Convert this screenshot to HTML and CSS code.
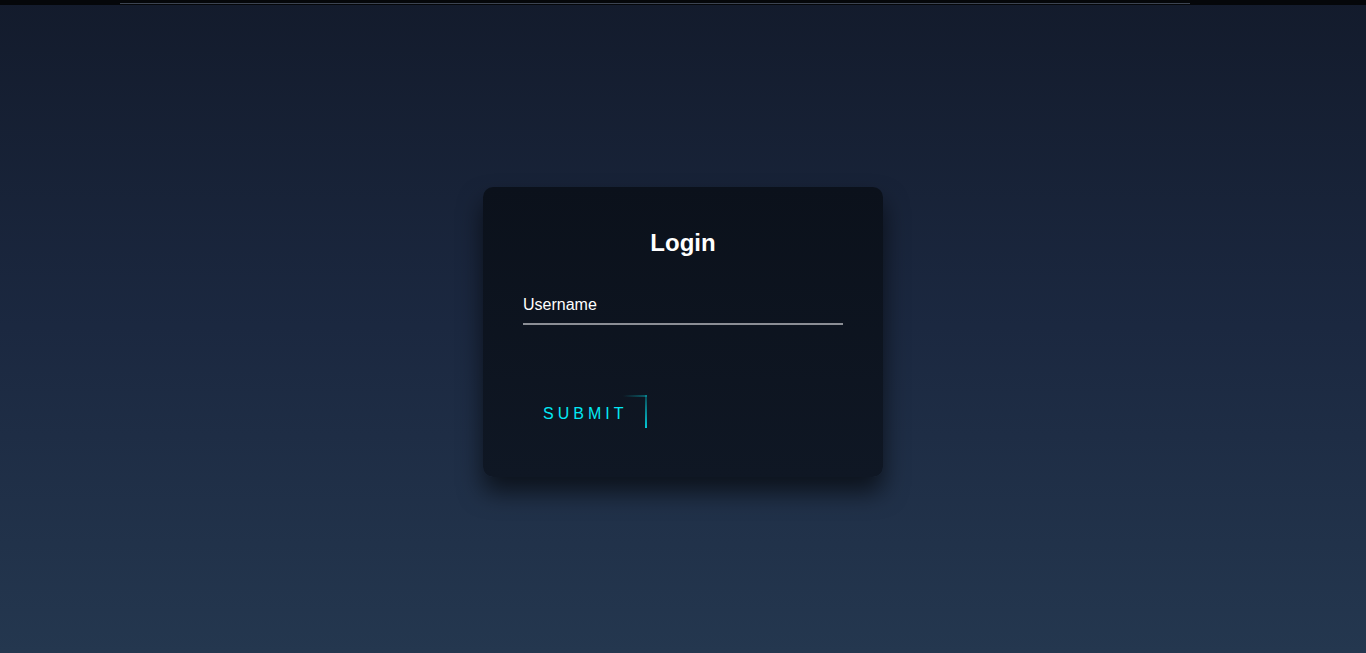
FILE: index.html
```html
<!DOCTYPE html>
<html lang="en">
<head>
<meta charset="utf-8">
<title>Login</title>
<link rel="stylesheet" href="styles.css">
</head>
<body>
<div class="topbar"><div class="topline"></div></div>
<main class="stage">
  <form class="login-box">
    <h2 class="title">Login</h2>
    <div class="user-box">
      <input class="field" type="text" required>
      <label class="label">Username</label>
    </div>
    <a class="submit" href="#">
      <span class="edge edge-top"></span>
      <span class="edge edge-right"></span>
      SUBMIT
    </a>
  </form>
</main>
</body>
</html>
```
FILE: styles.css
```css
html, body {
  margin: 0;
  padding: 0;
  height: 100%;
}
body {
  font-family: "Liberation Sans", Arial, sans-serif;
  background: linear-gradient(180deg, #131b2c 0%, #1b2840 50%, #24374f 100%);
  overflow: hidden;
}
.topbar {
  height: 5px;
  background: #05070a;
  position: relative;
}
.topline {
  position: absolute;
  left: 120px;
  width: 1070px;
  bottom: 1px;
  height: 1px;
  background: #3c4452;
}
.stage {
  height: 648px;
  display: flex;
  justify-content: center;
  align-items: flex-start;
  padding-top: 182px;
  box-sizing: border-box;
}
.login-box {
  width: 400px;
  box-sizing: border-box;
  padding: 42px 40px 40px;
  border-radius: 10px;
  background: linear-gradient(180deg, #0b111b 0%, #0f1724 100%);
  box-shadow: 0 15px 25px rgba(0, 0, 0, 0.6);
}
.title {
  margin: 0 0 28px;
  font-size: 24px;
  font-weight: bold;
  color: #fff;
  text-align: center;
  line-height: 28px;
}
.user-box {
  position: relative;
}
.field {
  display: block;
  width: 100%;
  box-sizing: border-box;
  padding: 10px 0;
  font-size: 16px;
  line-height: 18px;
  height: 40px;
  color: #fff;
  margin-bottom: 30px;
  border: none;
  border-bottom: 2px solid #8b8e95;
  outline: none;
  background: transparent;
  font-family: inherit;
}
.label {
  position: absolute;
  top: 0;
  left: 0;
  padding: 11px 0 9px;
  font-size: 16px;
  line-height: 18px;
  color: #fff;
  pointer-events: none;
}
.submit {
  position: relative;
  display: inline-block;
  padding: 10px 20px;
  margin-top: 40px;
  color: #03e9f4;
  font-size: 16px;
  line-height: 18px;
  text-decoration: none;
  letter-spacing: 4px;
  overflow: hidden;
}
.edge {
  position: absolute;
  display: block;
}
.edge-top {
  top: 0;
  right: 0;
  width: 24px;
  height: 2px;
  background: linear-gradient(90deg, transparent, rgba(3, 233, 244, 0.35));
}
.edge-right {
  top: 0;
  right: 0;
  width: 2px;
  height: 33px;
  background: linear-gradient(180deg, rgba(3, 233, 244, 0.25), #03c8d6);
}
```
